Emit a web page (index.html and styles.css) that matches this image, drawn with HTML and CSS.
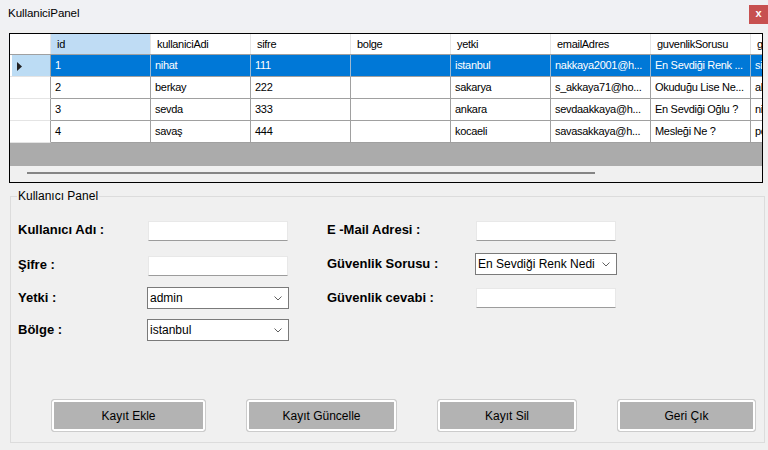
FILE: index.html
```html
<!DOCTYPE html>
<html lang="tr">
<head>
<meta charset="utf-8">
<title>KullaniciPanel</title>
<link rel="stylesheet" href="styles.css">
</head>
<body>
<div class="window">
  <div class="titlebar">
    <span class="title">KullaniciPanel</span>
    <span class="close">x</span>
  </div>

  <div class="grid">
    <div class="g-head">
      <div class="corner"></div>
      <div class="hc cur">id</div>
      <div class="hc">kullaniciAdi</div>
      <div class="hc">sifre</div>
      <div class="hc">bolge</div>
      <div class="hc">yetki</div>
      <div class="hc">emailAdres</div>
      <div class="hc">guvenlikSorusu</div>
      <div class="hc">guvenlikCevabi</div>
    </div>
    <div class="g-row sel">
      <div class="rh"><svg class="arrow" width="5" height="9" viewBox="0 0 5 9"><polygon points="0,0 5,4.5 0,9" fill="#222"/></svg></div>
      <div class="c">1</div>
      <div class="c">nihat</div>
      <div class="c">111</div>
      <div class="c"></div>
      <div class="c">istanbul</div>
      <div class="c">nakkaya2001@h...</div>
      <div class="c">En Sevdiği Renk ...</div>
      <div class="c">siyah</div>
    </div>
    <div class="g-row">
      <div class="rh"></div>
      <div class="c">2</div>
      <div class="c">berkay</div>
      <div class="c">222</div>
      <div class="c"></div>
      <div class="c">sakarya</div>
      <div class="c">s_akkaya71@ho...</div>
      <div class="c">Okuduğu Lise Ne...</div>
      <div class="c">akdeniz</div>
    </div>
    <div class="g-row">
      <div class="rh"></div>
      <div class="c">3</div>
      <div class="c">sevda</div>
      <div class="c">333</div>
      <div class="c"></div>
      <div class="c">ankara</div>
      <div class="c">sevdaakkaya@h...</div>
      <div class="c">En Sevdiği Oğlu ?</div>
      <div class="c">nihat</div>
    </div>
    <div class="g-row">
      <div class="rh"></div>
      <div class="c">4</div>
      <div class="c">savaş</div>
      <div class="c">444</div>
      <div class="c"></div>
      <div class="c">kocaeli</div>
      <div class="c">savasakkaya@h...</div>
      <div class="c">Mesleği Ne ?</div>
      <div class="c">polis</div>
    </div>
    <div class="g-empty"></div>
    <div class="g-scroll"><div class="thumb"></div></div>
  </div>

  <fieldset class="group">
    <legend>Kullanıcı Panel</legend>
    <div class="form">
      <div class="col col-left">
        <div class="f-row"><span class="lbl">Kullanıcı Adı :</span><input class="tb" type="text"></div>
        <div class="f-row"><span class="lbl">Şifre :</span><input class="tb" type="text"></div>
        <div class="f-row"><span class="lbl">Yetki :</span><div class="combo"><span>admin</span><svg class="chev" width="8" height="5" viewBox="0 0 8 5"><path d="M0.5 0.5 L4 4 L7.5 0.5" fill="none" stroke="#606060" stroke-width="1"/></svg></div></div>
        <div class="f-row"><span class="lbl">Bölge :</span><div class="combo"><span>istanbul</span><svg class="chev" width="8" height="5" viewBox="0 0 8 5"><path d="M0.5 0.5 L4 4 L7.5 0.5" fill="none" stroke="#606060" stroke-width="1"/></svg></div></div>
      </div>
      <div class="col col-right">
        <div class="f-row"><span class="lbl">E -Mail Adresi :</span><input class="tb" type="text"></div>
        <div class="f-row"><span class="lbl">Güvenlik Sorusu :</span><div class="combo"><span>En Sevdiği Renk Nedi</span><svg class="chev" width="8" height="5" viewBox="0 0 8 5"><path d="M0.5 0.5 L4 4 L7.5 0.5" fill="none" stroke="#606060" stroke-width="1"/></svg></div></div>
        <div class="f-row"><span class="lbl">Güvenlik cevabi :</span><input class="tb" type="text"></div>
      </div>
    </div>
    <div class="buttons">
      <button class="btn b1">Kayıt Ekle</button>
      <button class="btn b2">Kayıt Güncelle</button>
      <button class="btn b3">Kayıt Sil</button>
      <button class="btn b4">Geri Çık</button>
    </div>
  </fieldset>
</div>
</body>
</html>
```

FILE: styles.css
```css
html, body {
  margin: 0;
  padding: 0;
}
body {
  width: 768px;
  height: 450px;
  overflow: hidden;
  background: #f0f0f0;
  font-family: "Liberation Sans", Arial, sans-serif;
  color: #000;
}
.window {
  width: 768px;
  height: 450px;
  display: flex;
  flex-direction: column;
}

/* title bar */
.titlebar {
  height: 30px;
  display: flex;
  align-items: flex-start;
  background: #f0f1f4;
  flex-shrink: 0;
}
.title {
  padding: 5px 0 0 8px;
  font-size: 11.6px;
  line-height: 16px;
  letter-spacing: -0.1px;
  color: #000;
}
.close {
  margin-left: auto;
  margin-top: 5px;
  width: 19px;
  height: 19px;
  background: #c75050;
  color: #fff;
  font-size: 11px;
  font-weight: bold;
  line-height: 17px;
  text-align: center;
}

/* data grid */
.grid {
  margin: 3px 0 0 9px;
  width: 754px;
  height: 150px;
  box-sizing: border-box;
  border: 1px solid #000;
  background: #f0f0f0;
  display: flex;
  flex-direction: column;
  overflow: hidden;
  flex-shrink: 0;
}
.g-head, .g-row {
  display: flex;
  flex-shrink: 0;
}
.g-head {
  height: 21px;
  box-sizing: border-box;
  border-bottom: 1px solid #a0a0a0;
  background: #fff;
}
.corner {
  width: 41px;
  flex-shrink: 0;
  box-sizing: border-box;
  border-right: 1px solid #e6e6e6;
  background: #fff;
}
.hc {
  width: 100px;
  flex-shrink: 0;
  box-sizing: border-box;
  border-right: 1px solid #e5e5e5;
  padding-left: 6px;
  font-size: 11px;
  line-height: 20px;
  letter-spacing: -0.3px;
  white-space: nowrap;
  overflow: hidden;
  background: #fff;
}
.hc.cur {
  background: #bfdcf4;
}
.g-row {
  height: 22px;
}
.rh {
  width: 41px;
  flex-shrink: 0;
  box-sizing: border-box;
  border-right: 1px solid #a0a0a0;
  border-bottom: 1px solid #e4e4e4;
  background: #fff;
  display: flex;
  align-items: center;
  padding-left: 7px;
}
.c {
  width: 100px;
  flex-shrink: 0;
  box-sizing: border-box;
  border-right: 1px solid #a0a0a0;
  border-bottom: 1px solid #a0a0a0;
  padding-left: 4px;
  font-size: 11px;
  line-height: 21px;
  letter-spacing: -0.3px;
  white-space: nowrap;
  overflow: hidden;
  background: #fff;
}
.g-row.sel .rh {
  background: #bcdcf4;
  box-shadow: inset 2px 0 0 #fff;
}
.g-row.sel .c {
  background: #0078d7;
  color: #fff;
  border-right-color: #9fb8cf;
}
.arrow {
  display: block;
  margin-top: 1px;
}
.g-empty {
  height: 23px;
  background: #ababab;
  flex-shrink: 0;
}
.g-scroll {
  height: 16px;
  background: #f0f0f0;
  flex-shrink: 0;
}
.thumb {
  margin: 6px 0 0 17px;
  width: 568px;
  height: 2px;
  background: #858585;
}

/* group box */
.group {
  margin: 6px 0 0 10px;
  padding: 0;
  width: 755px;
  height: 254px;
  box-sizing: border-box;
  border: 1px solid #dcdcdc;
  min-width: 0;
}
.group legend {
  margin-left: 6px;
  padding: 0 1px;
  font-size: 12px;
  line-height: 14px;
  color: #000;
}
.form {
  display: grid;
  grid-template-columns: 309px auto;
  margin-left: 7px;
  height: 138px;
}
.col {
  display: flex;
  flex-direction: column;
}
.f-row {
  display: flex;
  align-items: center;
}
.lbl {
  font-size: 13px;
  font-weight: bold;
  line-height: 16px;
  white-space: nowrap;
}
.col-left .lbl { width: 130px; }
.col-right .lbl { width: 149px; }

.col-left .f-row:nth-child(1) { margin-top: 18px; height: 20px; }
.col-left .f-row:nth-child(2) { margin-top: 15px; height: 20px; }
.col-left .f-row:nth-child(3) { margin-top: 11px; height: 22px; }
.col-left .f-row:nth-child(4) { margin-top: 10px; height: 22px; }
.col-right .f-row:nth-child(1) { margin-top: 18px; height: 20px; }
.col-right .f-row:nth-child(2) { margin-top: 12px; height: 22px; }
.col-right .f-row:nth-child(3) { margin-top: 13px; height: 20px; }

.col-left .f-row:nth-child(1) .lbl { margin-top: -3px; }
.col-left .f-row:nth-child(2) .lbl { margin-top: -3px; }
.col-right .f-row:nth-child(1) .lbl { margin-top: -2px; }

.tb {
  width: 140px;
  height: 20px;
  box-sizing: border-box;
  margin: 0;
  padding: 0 2px;
  border: 1px solid #e8e8e8;
  border-bottom: 1px solid #9c9c9c;
  background: #fff;
  font-family: "Liberation Sans", Arial, sans-serif;
  font-size: 12px;
  outline: none;
}
.combo {
  width: 142px;
  height: 22px;
  box-sizing: border-box;
  margin-left: -1px;
  border: 1px solid #7a7a7a;
  background: #fff;
  display: flex;
  align-items: center;
  padding-left: 2px;
  padding-right: 6px;
  font-size: 12px;
  white-space: nowrap;
}
.combo span {
  flex: 1;
  overflow: hidden;
}
.chev {
  display: block;
  flex-shrink: 0;
  margin-left: 2px;
}

.buttons {
  display: flex;
  gap: 40px;
  margin: 58px 0 0 40px;
}
.btn {
  height: 33px;
  box-sizing: border-box;
  margin: 0;
  padding: 0;
  border: 1px solid #cccccc;
  border-radius: 3px;
  box-shadow: inset 0 0 0 2px #fff;
  background: #b3b3b3;
  font-family: "Liberation Sans", Arial, sans-serif;
  font-size: 12px;
  color: #000;
}
.b1 { width: 155px; }
.b2 { width: 151px; }
.b3 { width: 140px; }
.b4 { width: 139px; }
```
